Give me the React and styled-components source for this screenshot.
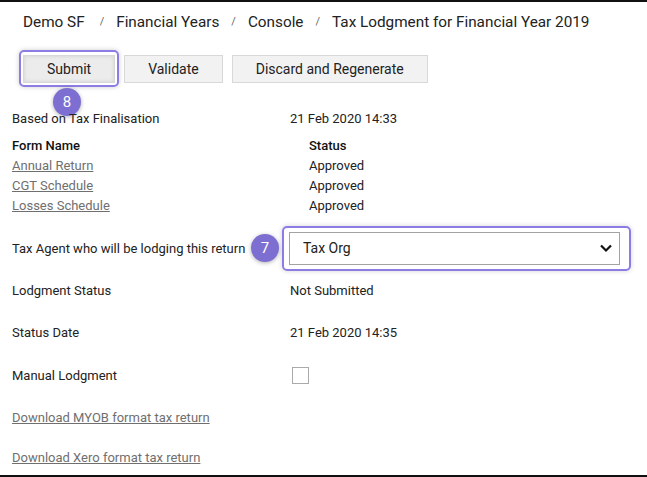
import styled, { createGlobalStyle } from "styled-components";

const GlobalStyle = createGlobalStyle`
  html, body {
    margin: 0;
    padding: 0;
    background: #fff;
  }
  body {
    font-family: Roboto, "Liberation Sans", sans-serif;
    font-size: 13px;
    color: #222;
  }
`;

const Frame = styled.div`
  box-sizing: border-box;
  width: 647px;
  height: 477px;
  border-top: 2px solid #111;
  border-bottom: 2px solid #111;
  overflow: hidden;
`;

const Crumbs = styled.nav`
  display: flex;
  align-items: center;
  height: 39px;
  padding-left: 23px;
  font-size: 15.3px;
  color: #222;
`;

const Crumb = styled.span`
  padding-right: ${(p) => (p.$first ? 3 : 0)}px;
`;

const Sep = styled.span`
  margin: 0 12px;
  font-size: 11px;
  color: #666;
`;

const Toolbar = styled.div`
  display: flex;
  gap: 9px;
  padding: 14px 0 0 23px;
`;

const ButtonWrap = styled.div`
  position: relative;
  display: flex;
`;

const Button = styled.button`
  height: 28px;
  padding: 0 23px;
  border: 1px solid #d8d8d8;
  background: ${(p) => (p.$active ? "#ececec" : "#f2f2f2")};
  box-shadow: ${(p) => (p.$active ? "inset 0 0 4px rgba(0,0,0,0.12)" : "none")};
  font-family: Roboto, "Liberation Sans", sans-serif;
  font-size: 14px;
  color: #222;
  cursor: pointer;
`;

const Highlight = styled.span`
  position: absolute;
  top: -5px;
  left: -4px;
  right: -4px;
  bottom: -4px;
  border: 2px solid #8c7ce3;
  border-radius: 5px;
  box-shadow: 0 0 5px rgba(0, 0, 0, 0.2);
  pointer-events: none;
`;

const Step = styled.span`
  position: absolute;
  width: 28px;
  height: 28px;
  border-radius: 50%;
  background: #7d6ed2;
  box-shadow: 0 1px 4px rgba(0, 0, 0, 0.3);
  color: #fff;
  font-size: 15px;
  display: flex;
  align-items: center;
  justify-content: center;
`;

const Body = styled.div`
  padding: 25px 0 0 12px;
`;

const Row = styled.div`
  display: flex;
  align-items: center;
  height: ${(p) => p.$h || 42}px;
`;

const Label = styled.div`
  width: 278px;
  flex-shrink: 0;
  position: relative;
`;

const Value = styled.div`
  position: relative;
  display: flex;
  align-items: center;
`;

const Forms = styled.div`
  display: grid;
  grid-template-columns: 297px auto;
  grid-auto-rows: 20px;
  align-items: center;
  margin: 7px 0 12px;
`;

const Head = styled.div`
  font-weight: 500;
  color: #111;
`;

const Link = styled.a`
  color: #6f6f6f;
  text-decoration: underline;
  cursor: pointer;
`;

const SelectBox = styled.div`
  box-sizing: border-box;
  width: 331px;
  height: 33px;
  margin-left: -1px;
  border: 1px solid #a3a3a3;
  display: flex;
  align-items: center;
  justify-content: space-between;
  padding: 0 6px 0 13px;
  font-size: 14px;
  color: #222;
`;

const SelectRing = styled.span`
  position: absolute;
  top: -6px;
  left: -8px;
  right: -11px;
  bottom: -6px;
  border: 2px solid #8c7ce3;
  border-radius: 5px;
  box-shadow: 0 0 5px rgba(0, 0, 0, 0.18);
  pointer-events: none;
`;

const Check = styled.span`
  box-sizing: border-box;
  width: 17px;
  height: 17px;
  margin: 0 0 0 2px;
  border: 1px solid #aaa;
  background: #fff;
`;

const Chevron = () => (
  <svg width="14" height="14" viewBox="0 0 14 14">
    <path d="M2 4.5 L7 9.5 L12 4.5" fill="none" stroke="#111" strokeWidth="2.2" />
  </svg>
);

const forms = [
  ["Annual Return", "Approved"],
  ["CGT Schedule", "Approved"],
  ["Losses Schedule", "Approved"],
];

export default function App() {
  return (
    <>
      <GlobalStyle />
      <Frame>
        <Crumbs>
          <Crumb $first>Demo SF</Crumb>
          <Sep>/</Sep>
          <Crumb>Financial Years</Crumb>
          <Sep>/</Sep>
          <Crumb>Console</Crumb>
          <Sep>/</Sep>
          <Crumb>Tax Lodgment for Financial Year 2019</Crumb>
        </Crumbs>

        <Toolbar>
          <ButtonWrap>
            <Button $active>Submit</Button>
            <Highlight />
            <Step style={{ left: 30, top: 33 }}>8</Step>
          </ButtonWrap>
          <Button>Validate</Button>
          <Button>Discard and Regenerate</Button>
        </Toolbar>

        <Body>
          <Row $h={20}>
            <Label>Based on Tax Finalisation</Label>
            <Value>21 Feb 2020 14:33</Value>
          </Row>

          <Forms>
            <Head>Form Name</Head>
            <Head>Status</Head>
            {forms.map(([name, status]) => (
              <>
                <div key={name}>
                  <Link>{name}</Link>
                </div>
                <div key={name + "-s"}>{status}</div>
              </>
            ))}
          </Forms>

          <Row $h={42}>
            <Label>
              Tax Agent who will be lodging this return
              <Step style={{ left: 239, top: -7 }}>7</Step>
            </Label>
            <Value>
              <SelectBox>
                <span>Tax Org</span>
                <Chevron />
              </SelectBox>
              <SelectRing />
            </Value>
          </Row>

          <Row $h={42}>
            <Label>Lodgment Status</Label>
            <Value>Not Submitted</Value>
          </Row>
          <Row $h={43}>
            <Label>Status Date</Label>
            <Value>21 Feb 2020 14:35</Value>
          </Row>
          <Row $h={43}>
            <Label>Manual Lodgment</Label>
            <Value>
              <Check />
            </Value>
          </Row>
          <Row $h={40}>
            <Link>Download MYOB format tax return</Link>
          </Row>
          <Row $h={41}>
            <Link>Download Xero format tax return</Link>
          </Row>
        </Body>
      </Frame>
    </>
  );
}
